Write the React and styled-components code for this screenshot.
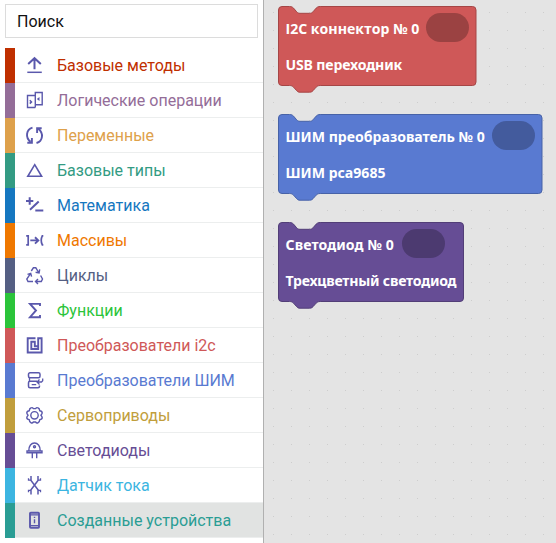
import React from "react";
import styled, { createGlobalStyle } from "styled-components";

const GlobalStyle = createGlobalStyle`
  * { box-sizing: border-box; }
  html, body { margin: 0; padding: 0; overflow: hidden; }
`;

const Page = styled.div`
  display: flex;
  width: 556px;
  height: 543px;
  overflow: hidden;
  background: #fff;
`;

const Sidebar = styled.aside`
  display: flex;
  flex-direction: column;
  flex: 0 0 264px;
  gap: 10px;
  padding: 4px 0 0 5px;
  border-right: 1px solid #b0b0b0;
  font-family: Roboto, sans-serif;
  font-size: 16px;
`;

const Search = styled.input`
  width: 253px;
  height: 34px;
  padding: 0 11px;
  border: 1px solid #dcdcdc;
  background: #fff;
  color: #111;
  font: inherit;
  outline: none;
  &::placeholder { color: #111; opacity: 1; }
`;

const CategoryList = styled.ul`
  list-style: none;
  margin: 0;
  padding: 0;
`;

const Category = styled.li`
  display: flex;
  align-items: center;
  height: 35px;
  border-left: 10px solid ${(p) => p.$bar};
  color: ${(p) => p.$text};
  background: linear-gradient(#eceeee, #eceeee) left bottom / 100% 1px no-repeat
    ${(p) => (p.$selected ? "#e1e3e2" : "#fff")};
`;

const Icon = styled.svg`
  flex: none;
  width: 20px;
  height: 20px;
  margin: 0 12px 1px 10px;
  fill: none;
  stroke: #5a58ac;
  stroke-width: 1.4;
`;

const CategoryName = styled.span`
  line-height: 34px;
  white-space: nowrap;
`;

const Workspace = styled.main`
  display: flex;
  flex-direction: column;
  align-items: flex-start;
  flex: 1;
  gap: 20px;
  padding: 5px 0 0 13px;
  background: #e4e4e4 radial-gradient(circle at 9.5px 12.5px, #cdcdcd 0.8px, transparent 0.9px) 0 0 / 18px 18px;
`;

const Block = styled.section`
  position: relative;
  width: ${(p) => p.$width}px;
  height: 88px;
`;

const BlockShape = styled.svg`
  position: absolute;
  inset: 0;
  display: block;
`;

const BlockBody = styled.div`
  position: relative;
  padding: 5px 0 0 8.5px;
  color: #fff;
  font: 700 14.1px "Noto Sans", "Open Sans", sans-serif;
`;

const BlockRow = styled.div`
  display: flex;
  align-items: center;
  gap: 7px;
  height: 36px;
  white-space: nowrap;
`;

const BlockLabel = styled.span`
  width: ${(p) => (p.$width ? `${p.$width}px` : "auto")};
  font-family: ${(p) => (p.$plainCapitals ? '"Open Sans", sans-serif' : "inherit")};
  letter-spacing: ${(p) => p.$track || 0}px;
`;

const Slot = styled.span`
  width: 43px;
  height: 29px;
  margin-top: -2px;
  border-radius: 15px;
  background: ${(p) => p.$color};
`;

const icons = {
  upload: (
    <g strokeWidth="2">
      <path d="M9.500 14.300V3.500M3.200 9 9.500 3.200 15.800 9" />
      <path d="M2.300 17.300h14.500" strokeWidth="1.500" />
    </g>
  ),
  logic: (
    <g>
      <path d="M10 5.500H2.500v12h7.800M10.300 2.500h6.900v12.300h-6.900zM10.300 14.800v2.700" />
      <path d="m4.800 10.200 1.700 1.700-1.700 1.700" strokeWidth="1.500" />
      <path d="m14.500 7-2.700 2 2.700 2z" fill="#5a58ac" stroke="none" />
    </g>
  ),
  variables: (
    <g strokeWidth="1.900">
      <path d="M7.500 2.700C1 4.500.2 12.500 5.500 16.700M2.300 17.700h4.600v-4.700" />
      <path d="M11.500 18c6.500-1.800 7.300-9.800 2-14M16.700 3.200h-4.600v4.700" />
    </g>
  ),
  triangle: <path d="m9.700 4.700 6.900 11.600H2.800z" strokeWidth="1.600" />,
  math: (
    <g strokeWidth="2">
      <path d="M1 6h7.300M4.700 2.300v7.400" />
      <path d="m5 14.700 8.700-8.200" />
      <path d="M10.300 15.500h8" />
    </g>
  ),
  array: (
    <g strokeWidth="1.700">
      <path d="M1.200 5.800h2v9h-2M18.300 5.800h-1c-1.500 3-1.500 6 0 9h1" />
      <path d="M5.300 10.400h8M10 7.200l3.300 3.200-3.300 3.200" strokeWidth="1.900" />
    </g>
  ),
  recycle: (
    <g strokeWidth="1.400">
      <path d="M6.300 6 8.400 2.800h2.400L13.700 7.500M10.600 7.200l3.500.7.600-3.500" />
      <path d="m15.600 10.500 1.900 3.500-1.200 2.500h-5.500M13 14l-2.500 2.500L13 19" />
      <path d="M8 16.500H3L1.800 14l3.500-5.200M2.500 9.300l3.200-.9.900 3.200" />
    </g>
  ),
  sigma: <path d="M15 6V3.900H5l6 6.600-6 6.700h10v-2.100" strokeWidth="1.900" />,
  spiral: <path d="M10.500 3.200H2.700v14.300h13.900V3.200h-3.400V14H6.300V6.700h3.500v4.500H13" strokeWidth="1.900" />,
  pwm: (
    <g strokeWidth="1.500">
      <rect x="3.500" y="2.800" width="11.500" height="5" rx="1.500" />
      <path d="M12 11.300H5a1.500 1.500 0 0 0-1.500 1.500v3.500A1.500 1.500 0 0 0 5 17.800h8a1.500 1.500 0 0 0 1.500-1.500v-.8" />
      <path d="M4.500 7.800v3.500M6.700 14.600h4.500M17.700 8.500v2.300l-1.200 1.200h-4M14.500 9.500 12 12l2.500 2.500" strokeWidth="1.300" />
    </g>
  ),
  gear: (
    <g>
      <circle cx="9.500" cy="10.300" r="3.700" />
      <path d="M5.800 3q1.500-1 2.600.6h2.200Q11.700 2 13.200 3q1.500.7 1.500 2.800 2.500.3 2.500 2.200-.1 1-1.300 2.300 1.200 1.300 1.300 2.300 0 1.900-2.500 2.200 0 2.100-1.500 2.800-1.500 1-2.600-.6H8.400q-1.100 1.600-2.600.6-1.500-.7-1.500-2.800-2.500-.3-2.500-2.200.1-1 1.300-2.300Q1.900 9 1.800 8q0-1.900 2.500-2.200Q4.300 3.700 5.800 3z" strokeLinejoin="round" />
    </g>
  ),
  led: (
    <g>
      <path d="M3.800 11C3.300.3 15.700.3 15.200 11M2 11h15v1.700H2zM7.300 13v5.300M11.700 13v5.300" />
      <circle cx="9.500" cy="6.700" r="1" />
    </g>
  ),
  current: (
    <g strokeWidth="1.500">
      <path d="M6 1v4.500l7 9.300v4.700M13 1v4.500L6 14.800v4.700" />
      <path d="M3.500 3.300v1.900H6M15.500 3.300v1.900H13M3.500 17.300v-2H6M15.500 17.300v-2H13" strokeWidth="1.300" />
    </g>
  ),
  device: (
    <g>
      <rect x="5" y="2.700" width="9" height="15" rx=".8" strokeWidth="1.900" />
      <path d="M5 4.800h9M5 15.700h9" strokeWidth="1.200" />
      <path d="M9.500 6.800V8M9.500 9.300v4" strokeWidth="1.400" />
    </g>
  ),
};

const categories = [
  { name: "Базовые методы", icon: "upload", bar: "#bf2f00", text: "#bf2f00" },
  { name: "Логические операции", icon: "logic", bar: "#946d98", text: "#946d98" },
  { name: "Переменные", icon: "variables", bar: "#dea14b", text: "#dea14b" },
  { name: "Базовые типы", icon: "triangle", bar: "#339b83", text: "#339b83" },
  { name: "Математика", icon: "math", bar: "#1577c0", text: "#1577c0" },
  { name: "Массивы", icon: "array", bar: "#ef7800", text: "#ef7800" },
  { name: "Циклы", icon: "recycle", bar: "#555f83", text: "#555f83" },
  { name: "Функции", icon: "sigma", bar: "#2bc43a", text: "#2bc43a" },
  { name: "Преобразователи i2c", icon: "spiral", bar: "#cf5858", text: "#cf5858" },
  { name: "Преобразователи ШИМ", icon: "pwm", bar: "#597ad1", text: "#597ad1" },
  { name: "Сервоприводы", icon: "gear", bar: "#c19e3c", text: "#c19e3c" },
  { name: "Светодиоды", icon: "led", bar: "#664d95", text: "#664d95" },
  { name: "Датчик тока", icon: "current", bar: "#3cb5e1", text: "#3cb5e1" },
  { name: "Созданные устройства", icon: "device", bar: "#2a9d94", text: "#2a9d94", selected: true },
];

const blocks = [
  { width: 200.5, title: "I2C коннектор № 0", titleWidth: 133, plainCapitals: true, subtitle: "USB переходник", track: -0.15, fill: "#cf5858", edge: "#a54646", slot: "#9b4242" },
  { width: 266.5, title: "ШИМ преобразователь № 0", titleWidth: 199, subtitle: "ШИМ pca9685", fill: "#597ad1", edge: "#4762a7", slot: "#435b9d" },
  { width: 188, title: "Светодиод № 0", titleWidth: 109, titleTrack: 0.1, subtitle: "Трехцветный светодиод", track: -0.22, fill: "#664d95", edge: "#523e77", slot: "#4c3a70" },
];

// Stack block contour: rounded corners, a notch on top and a matching tab below.
const outline = (w) => {
  const r = w - 1.5;
  return `M1.500 5a3.500 3.500 0 0 1 3.500-3.500h7.500c2 0 3 .6 4 1.600l3.200 3.700c1 1.100 1.800 1.500 3.300 1.500h9.500c1.500 0 2.500-.4 3.500-1.500l3.200-3.700c1-1 2-1.600 4-1.600H${r - 3.5}a3.500 3.500 0 0 1 3.500 3.500V77a3.500 3.500 0 0 1-3.500 3.500H43.200c-2 0-3 .6-4 1.600L36 85.700c-1 1.100-2 1.500-3.500 1.500H23c-1.500 0-2.300-.4-3.300-1.500l-3.200-3.600c-1-1-2-1.600-4-1.600H5a3.500 3.500 0 0 1-3.500-3.500z`;
};

export default function App() {
  return (
    <Page>
      <GlobalStyle />
      <Sidebar>
        <Search placeholder="Поиск" aria-label="Поиск" />
        <CategoryList>
          {categories.map((c) => (
            <Category key={c.name} $bar={c.bar} $text={c.text} $selected={c.selected}>
              <Icon viewBox="0 0 20 20">{icons[c.icon]}</Icon>
              <CategoryName>{c.name}</CategoryName>
            </Category>
          ))}
        </CategoryList>
      </Sidebar>
      <Workspace>
        {blocks.map((b) => (
          <Block key={b.title} $width={b.width}>
            <BlockShape width={b.width} height="88">
              <path d={outline(b.width)} fill={b.fill} stroke={b.edge} />
            </BlockShape>
            <BlockBody>
              <BlockRow>
                <BlockLabel $width={b.titleWidth} $track={b.titleTrack} $plainCapitals={b.plainCapitals}>
                  {b.title}
                </BlockLabel>
                <Slot $color={b.slot} />
              </BlockRow>
              <BlockRow>
                <BlockLabel $track={b.track}>{b.subtitle}</BlockLabel>
              </BlockRow>
            </BlockBody>
          </Block>
        ))}
      </Workspace>
    </Page>
  );
}
